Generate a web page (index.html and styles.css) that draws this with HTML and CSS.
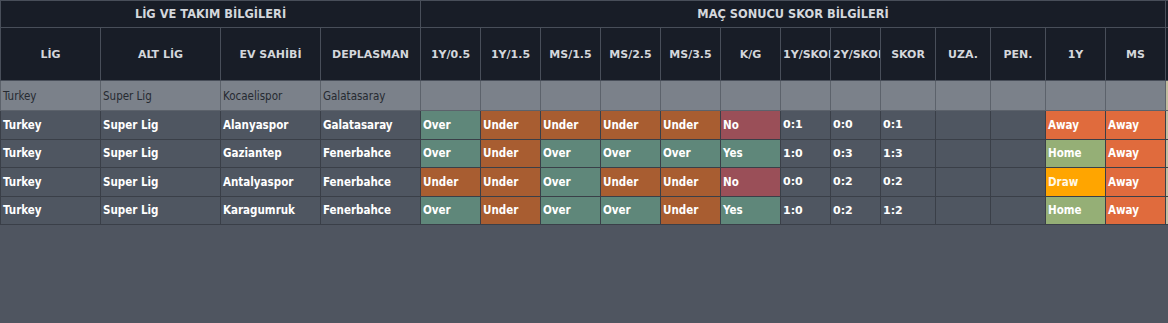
FILE: index.html
```html
<!DOCTYPE html>
<html lang="tr">
<head>
<meta charset="utf-8">
<title>Maç Sonucu Skor Bilgileri</title>
<link rel="stylesheet" href="styles.css">
</head>
<body>
<div class="wrap">
<table class="grid">
  <colgroup>
    <col class="w100"><col class="w120"><col class="w100"><col class="w100">
    <col class="w60"><col class="w60"><col class="w60"><col class="w60"><col class="w60"><col class="w60">
    <col class="w50"><col class="w50"><col class="w55"><col class="w55"><col class="w55">
    <col class="w60"><col class="w60"><col class="w60">
  </colgroup>
  <thead>
    <tr class="group">
      <th colspan="4">LİG VE TAKIM BİLGİLERİ</th>
      <th colspan="13">MAÇ SONUCU SKOR BİLGİLERİ</th>
      <th></th>
    </tr>
    <tr class="cols">
      <th>LİG</th><th>ALT LİG</th><th>EV SAHİBİ</th><th>DEPLASMAN</th>
      <th>1Y/0.5</th><th>1Y/1.5</th><th>MS/1.5</th><th>MS/2.5</th><th>MS/3.5</th><th>K/G</th>
      <th class="clip">1Y/SKOR</th><th class="clip">2Y/SKOR</th><th>SKOR</th><th>UZA.</th><th>PEN.</th>
      <th>1Y</th><th>MS</th><th></th>
    </tr>
  </thead>
  <tbody>
    <tr class="filter">
      <td>Turkey</td><td>Super Lig</td><td>Kocaelispor</td><td>Galatasaray</td>
      <td></td><td></td><td></td><td></td><td></td><td></td>
      <td></td><td></td><td></td><td></td><td></td><td></td><td></td><td class="extra"></td>
    </tr>
    <tr class="row">
      <td>Turkey</td><td>Super Lig</td><td>Alanyaspor</td><td>Galatasaray</td>
      <td class="over">Over</td><td class="under">Under</td><td class="under">Under</td><td class="under">Under</td><td class="under">Under</td><td class="no">No</td>
      <td class="score">0:1</td><td class="score">0:0</td><td class="score">0:1</td><td></td><td></td>
      <td class="away">Away</td><td class="away">Away</td><td class="extra"></td>
    </tr>
    <tr class="row">
      <td>Turkey</td><td>Super Lig</td><td>Gaziantep</td><td>Fenerbahce</td>
      <td class="over">Over</td><td class="under">Under</td><td class="over">Over</td><td class="over">Over</td><td class="over">Over</td><td class="over">Yes</td>
      <td class="score">1:0</td><td class="score">0:3</td><td class="score">1:3</td><td></td><td></td>
      <td class="home">Home</td><td class="away">Away</td><td class="extra"></td>
    </tr>
    <tr class="row">
      <td>Turkey</td><td>Super Lig</td><td>Antalyaspor</td><td>Fenerbahce</td>
      <td class="under">Under</td><td class="under">Under</td><td class="over">Over</td><td class="under">Under</td><td class="under">Under</td><td class="no">No</td>
      <td class="score">0:0</td><td class="score">0:2</td><td class="score">0:2</td><td></td><td></td>
      <td class="draw">Draw</td><td class="away">Away</td><td class="extra"></td>
    </tr>
    <tr class="row">
      <td>Turkey</td><td>Super Lig</td><td>Karagumruk</td><td>Fenerbahce</td>
      <td class="over">Over</td><td class="under">Under</td><td class="over">Over</td><td class="over">Over</td><td class="under">Under</td><td class="over">Yes</td>
      <td class="score">1:0</td><td class="score">0:2</td><td class="score">1:2</td><td></td><td></td>
      <td class="home">Home</td><td class="away">Away</td><td class="extra"></td>
    </tr>
  </tbody>
</table>
</div>
</body>
</html>
```

FILE: styles.css
```css
html, body {
  margin: 0;
  padding: 0;
  background: #4f5560;
}

.wrap {
  width: 100%;
  overflow: hidden;
}

.grid {
  border-collapse: collapse;
  table-layout: fixed;
  width: 1225px;
  font-family: "DejaVu Sans", sans-serif;
}

.w100 { width: 100px; }
.w120 { width: 120px; }
.w60 { width: 60px; }
.w55 { width: 55px; }
.w50 { width: 50px; }

.grid th {
  background: #181d27;
  color: #d4d7dc;
  font-weight: bold;
  font-size: 11px;
  border: 1px solid #484e59;
  white-space: nowrap;
  overflow: hidden;
  padding: 0 2px;
  text-align: center;
}

.group th {
  height: 26px;
  font-size: 11.4px;
}

.cols th {
  height: 52px;
}

.cols th.clip {
  text-align: left;
}

.grid td {
  border: 1px solid #3a3f48;
  white-space: nowrap;
  overflow: hidden;
  padding: 0 2px;
  text-align: left;
}

.filter td {
  height: 29px;
  background: #7b818a;
  color: #262a31;
  font-family: "DejaVu Sans Condensed", "DejaVu Sans", sans-serif;
  font-size: 11.5px;
  font-stretch: condensed;
  border-color: #5c626b;
}

.row td {
  height: 27.5px;
  background: #4f5661;
  color: #ffffff;
  font-family: "DejaVu Sans Condensed", "DejaVu Sans", sans-serif;
  font-stretch: condensed;
  font-weight: bold;
  font-size: 11.5px;
}

.row td.score {
  font-family: "DejaVu Sans", sans-serif;
  font-stretch: normal;
  font-size: 11px;
}

.row td.over { background: #5f877a; }
.row td.under { background: #a85d31; }
.row td.no { background: #9a4f58; }
.row td.away { background: #e06b3d; }
.row td.home { background: #95af76; }
.row td.draw { background: #ffa500; color: #fff8e6; }
.grid td.extra { background: #c2bd9f; }
```
